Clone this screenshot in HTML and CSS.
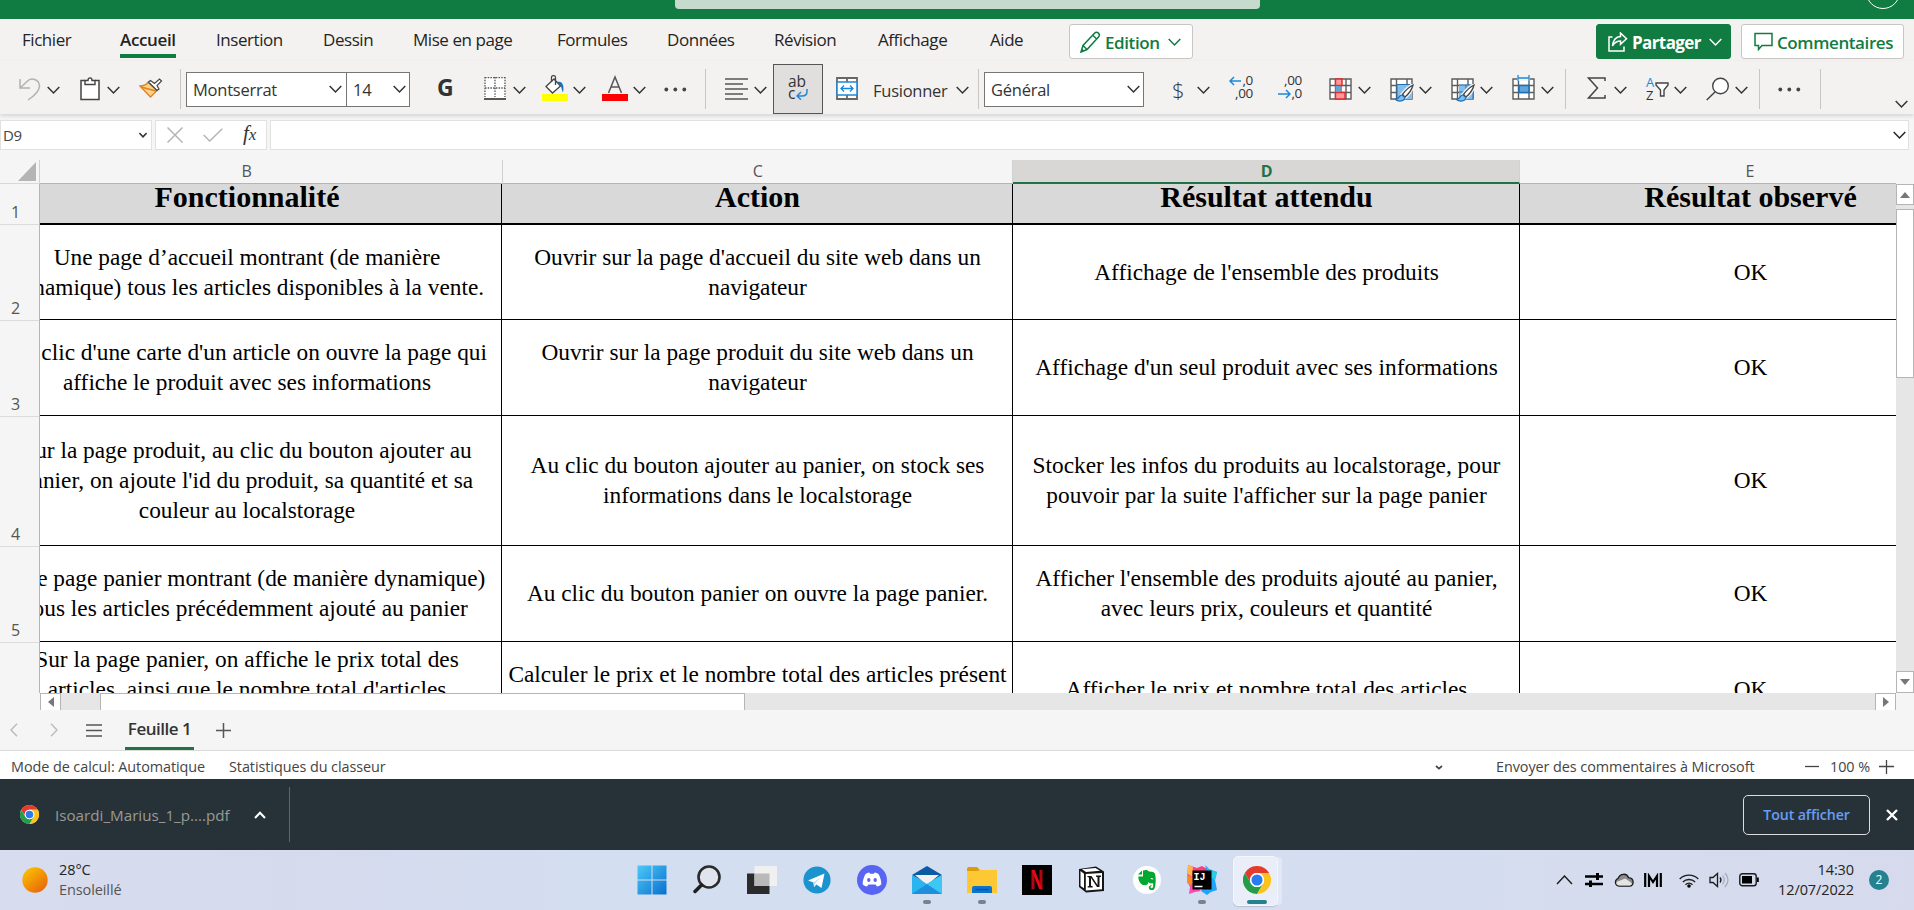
FILE: index.html
```html
<!DOCTYPE html>
<html lang="fr">
<head>
<meta charset="utf-8">
<title>Classeur</title>
<link rel="stylesheet" href="styles.css">
</head>
<body>
<svg class="defs" width="0" height="0">
  <symbol id="chev" viewBox="0 0 13 8"><path d="M.7.9 6.500 6.900 12.300.9" fill="none" stroke="currentColor" stroke-width="1.500"/></symbol>
  <symbol id="chrome" viewBox="0 0 48 48">
    <circle cx="24" cy="24" r="24" fill="#fff"/>
    <path d="M3.200 12A24 24 0 0 1 44.800 12H24A12 12 0 0 0 13.600 30z" fill="#e33b2e"/>
    <path d="M44.800 12A24 24 0 0 1 24 48L34.400 30A12 12 0 0 0 24 12z" fill="#fcc31e"/>
    <path d="M24 48A24 24 0 0 1 3.200 12L13.600 30A12 12 0 0 0 34.400 30z" fill="#259c48"/>
    <circle cx="24" cy="24" r="12" fill="#fff"/><circle cx="24" cy="24" r="9.500" fill="#2a7bf0"/>
  </symbol>
  <symbol id="cells" viewBox="0 0 24 24"><path d="M1 2h21v20H1z" fill="#fff"/><path d="M1 2h21v20H1zM1 8.500h21M1 15.500h21M6.500 2v20M17 2v20" fill="none" stroke="#5c5c5c" stroke-width="1.400"/></symbol>
  <symbol id="brushlet" viewBox="0 0 19 18"><path d="M18 1C14 3 10 7 7.500 10.500L10 13C13 10.500 17 5 18 1z" fill="#fff" stroke="#f3f2f1" stroke-width="4"/><path d="M18 1C14 3 10 7 7.500 10.500L10 13C13 10.500 17 5 18 1z" fill="#fff" stroke="#444" stroke-width="1.300"/><path d="M7 11C3.500 11 5 15 .5 15.500 3.500 18 9.500 17.500 10 13.500z" fill="#83beec" stroke="#1e6fb5" stroke-width="1.200"/></symbol>
</svg>

<header class="titlebar"><div class="search"></div><div class="avatar"></div></header>

<div class="tabs">
  <nav class="tabnames">
    <span>Fichier</span><span class="active">Accueil</span><span>Insertion</span><span>Dessin</span><span>Mise en page</span><span>Formules</span><span>Données</span><span>Révision</span><span>Affichage</span><span>Aide</span>
  </nav>
  <div class="btn edition">
    <svg width="21" height="22" viewBox="0 0 21 22"><path d="M1 21 3 14.500 14.500 2.200a2.600 2.600 0 0 1 4 3.800L7 18.500zM3 14.500l4 4M12.800 4.200l3.900 3.800M2 18.500l1.500 1.500" fill="none" stroke="currentColor" stroke-width="1.500"/></svg>
    <b>Edition</b><svg class="cv" width="13" height="8"><use href="#chev"/></svg>
  </div>
  <div class="btn share">
    <svg width="20" height="20" viewBox="0 0 20 20"><path d="M4.500 5H1v14h15v-4.500M12.500 1l6 5.700-6 5.500V9C9 9 6.500 10.500 4.500 14 5 9 7.500 4.800 12.500 4.500z" fill="none" stroke="currentColor" stroke-width="1.500"/></svg>
    <b>Partager</b><svg class="cv" width="13" height="8"><use href="#chev"/></svg>
  </div>
  <div class="btn comments">
    <svg width="19" height="19" viewBox="0 0 19 19"><path d="M1 1.500h17v12H8L4.500 17.500v-4H1z" fill="none" stroke="currentColor" stroke-width="1.500"/></svg>
    <b>Commentaires</b>
  </div>
</div>

<div class="toolbar">
  <svg class="dim" width="22" height="24" viewBox="0 0 22 24"><path d="M1 2v9h10M1 11 8 4.500C12 0 20 2 20.500 9c0 5-4 9-11.500 14" fill="none" stroke="currentColor" stroke-width="1.500"/></svg>
  <svg class="cv" width="13" height="8"><use href="#chev"/></svg>
  <svg width="20" height="24" viewBox="0 0 20 24"><path d="M5 3.500H1v19h18v-19h-4" fill="#fff" stroke="#444" stroke-width="1.500"/><path d="M5 7.500v-4h3C8 0 12 0 12 3.500h3v4z" fill="#fff" stroke="#444" stroke-width="1.400"/></svg>
  <svg class="cv" width="13" height="8"><use href="#chev"/></svg>
  <svg class="raise" width="24" height="20" viewBox="0 0 24 20"><path d="M1 8Q6 8 9 4.500L18 12.500 11.500 19Z" fill="#fbd48b" stroke="#e5801c" stroke-width="1.300"/><path d="m2 9 15 4" stroke="#e5801c" stroke-width="1.300" fill="none"/><path d="m9.500 4 2-1.500 4 3L20.500 1l2 2-4.500 4.500 2 3.500-2 1.500z" fill="#fff" stroke="#444" stroke-width="1.200"/></svg>
  <i class="sep"></i>
  <div class="box font"><span>Montserrat</span><svg class="cv" width="13" height="8"><use href="#chev"/></svg></div>
  <div class="box size"><span>14</span><svg class="cv" width="13" height="8"><use href="#chev"/></svg></div>
  <b class="bold">G</b>
  <svg class="raise2" width="22" height="23" viewBox="0 0 22 23"><path d="M1 1h20v20H1z" fill="#fff"/><path d="M1 .7h20M1 11h20M1 0v20M11 0v20M21 0v20" fill="none" stroke="#555" stroke-width="1.300" stroke-dasharray="1.500 1.200"/><path d="M0 22h22" stroke="#444" stroke-width="1.800"/></svg>
  <svg class="cv" width="13" height="8"><use href="#chev"/></svg>
  <svg class="raise" width="26" height="26" viewBox="0 0 26 26"><path d="M4 11.500 12 4l6.500 7-8 7zM9.500 7V2.500C9.500 0 13.500 0 13.500 2.500V10" fill="#fff" stroke="#444" stroke-width="1.300"/><path d="M15.500 7c5-1.500 7 4 5.500 10.500-1.500-2-1-5-2.500-6.500z" fill="#1e6fb5"/><path d="M0 19h26v7H0z" fill="#ff0"/></svg>
  <svg class="cv" width="13" height="8"><use href="#chev"/></svg>
  <svg class="raise" width="26" height="26" viewBox="0 0 26 26"><path d="M6.500 18 13 2l6.500 16M8.800 12h8.500" fill="none" stroke="#555" stroke-width="1.500"/><path d="M0 19h26v7H0z" fill="#f00"/></svg>
  <svg class="cv" width="13" height="8"><use href="#chev"/></svg>
  <svg class="dots" width="23" height="5" viewBox="0 0 23 5"><circle cx="2.300" cy="2.500" r="1.900"/><circle cx="11.300" cy="2.500" r="1.900"/><circle cx="20.300" cy="2.500" r="1.900"/></svg>
  <i class="sep"></i>
  <svg width="24" height="22" viewBox="0 0 24 22"><path d="M0 1h23M0 6h18M0 11h23M0 16h18M0 21h23" stroke="#555" stroke-width="1.500"/></svg>
  <svg class="cv" width="13" height="8"><use href="#chev"/></svg>
  <div class="wrapbtn"><span>ab</span><div><span>c</span><svg width="12" height="11" viewBox="0 0 12 11"><path d="M11 0v2.500C11 6 9 7 6 7H1M5 3 1 7l4 3.700" fill="none" stroke="#1e88d8" stroke-width="1.500"/></svg></div></div>
  <svg class="raise2" width="22" height="23" viewBox="0 0 22 23"><path d="M1 1h20v21H1zM11 1v4M11 18v4" fill="#fff" stroke="#666" stroke-width="1.800"/><path d="M1 5h20v13H1z" fill="#fff" stroke="#1e88d8" stroke-width="1.500"/><path d="M5 11.500h12M8 8.500l-3 3 3 3M14 8.500l3 3-3 3" fill="none" stroke="#1e88d8" stroke-width="1.300"/></svg>
  <span class="lbl">Fusionner</span>
  <svg class="cv" width="13" height="8"><use href="#chev"/></svg>
  <i class="sep"></i>
  <div class="box fmt"><span>Général</span><svg class="cv" width="13" height="8"><use href="#chev"/></svg></div>
  <span class="dollar">$</span>
  <svg class="cv" width="13" height="8"><use href="#chev"/></svg>
  <div class="dec"><div><svg width="13" height="10" viewBox="0 0 13 10"><path d="M1 5h11M5 1 1 5l4 4" fill="none" stroke="#1e88d8" stroke-width="1.500"/></svg>,0</div><div>,00</div></div>
  <div class="dec"><div>,00</div><div><svg width="13" height="10" viewBox="0 0 13 10"><path d="M0 5h11M8 1l4 4-4 4" fill="none" stroke="#1e88d8" stroke-width="1.500"/></svg>,0</div></div>
  <svg width="24" height="24"><use href="#cells" width="24" height="24"/><path d="M12 2v20" stroke="#5c5c5c" stroke-width="1.300"/><path d="M6.500 2h6.500v6.500H6.500zM6.500 15.500h9.500V22H6.500z" fill="#ff9a9a" stroke="#e02c2c" stroke-width="1.400"/><path d="M6.500 9h5v6h-5z" fill="#5fa5e0"/></svg>
  <svg class="cv" width="13" height="8"><use href="#chev"/></svg>
  <svg width="26" height="26"><use href="#cells" width="24" height="24" y="1"/><path d="M7 8.500h15V23H7z" fill="#83beec"/><path d="M7 23V8.500h15" fill="none" stroke="#1e6fb5"/><use href="#brushlet" x="5" y="8" width="19" height="18"/></svg>
  <svg class="cv" width="13" height="8"><use href="#chev"/></svg>
  <svg width="26" height="26"><use href="#cells" width="24" height="24" y="1"/><path d="M8 9h14v14H8z" fill="#83beec"/><path d="M8 9h14v14M15 9v14M8 16h14" stroke="#1e6fb5" fill="none"/><use href="#brushlet" x="5" y="8" width="19" height="18"/></svg>
  <svg class="cv" width="13" height="8"><use href="#chev"/></svg>
  <svg class="raise2" width="24" height="26"><use href="#cells" width="24" height="24" y="2"/><path d="M5 0h13v6H5z" fill="#f3f2f1"/><path d="M6 0v6M17 0v6M6 3h11" stroke="#1e88d8" stroke-width="1.300"/><path d="M7 10.500h10v7H7z" fill="#5fa5e0" stroke="#1e6fb5" stroke-width="1.500"/></svg>
  <svg class="cv" width="13" height="8"><use href="#chev"/></svg>
  <i class="sep"></i>
  <svg class="raise2" width="19" height="22" viewBox="0 0 19 22"><path d="M18 4V1H1.500l9 10-9 10H18v-3" fill="none" stroke="#444" stroke-width="1.500"/></svg>
  <svg class="cv" width="13" height="8"><use href="#chev"/></svg>
  <div class="sort"><div><span class="a">A</span><span>Z</span></div><svg width="14" height="15" viewBox="0 0 14 15"><path d="M1 1h12v2L9 8v6H5.500V8L1 3z" fill="#fff" stroke="#444" stroke-width="1.400"/></svg></div>
  <svg class="cv" width="13" height="8"><use href="#chev"/></svg>
  <svg width="24" height="24" viewBox="0 0 24 24"><circle cx="14.500" cy="9" r="7.800" fill="#fff" stroke="#444" stroke-width="1.400"/><path d="M9 15 .7 23" stroke="#444" stroke-width="1.500"/></svg>
  <svg class="cv" width="13" height="8"><use href="#chev"/></svg>
  <i class="sep"></i>
  <svg class="dots" width="23" height="5" viewBox="0 0 23 5"><circle cx="2.300" cy="2.500" r="1.900"/><circle cx="11.300" cy="2.500" r="1.900"/><circle cx="20.300" cy="2.500" r="1.900"/></svg>
  <i class="sep"></i>
  <svg class="cv low" width="13" height="8"><use href="#chev"/></svg>
</div>

<div class="formula">
  <div class="namebox"><span>D9</span><svg width="8" height="6" viewBox="0 0 13 8"><path d="M.7.9 6.500 6.900 12.300.9" fill="none" stroke="#333" stroke-width="2.500"/></svg></div>
  <div class="fxbox">
    <svg width="16" height="16" viewBox="0 0 16 16"><path d="m.5.500 15 15M15.500.500l-15 15" stroke="#b5b5b5" stroke-width="1.500"/></svg>
    <svg width="20" height="14" viewBox="0 0 20 14"><path d="m.7 7 6 6L19.300.700" fill="none" stroke="#b5b5b5" stroke-width="1.500"/></svg>
    <i>f<small>x</small></i>
  </div>
  <div class="input"><svg width="13" height="8"><use href="#chev"/></svg></div>
</div>

<div class="sheet">
  <div class="colheads"><div class="corner"><svg width="18" height="19"><path d="M18 0v19H0z" fill="#b4b4b4"/></svg></div><div>B</div><div>C</div><div class="sel">D</div><div class="e">E</div><div class="end"></div></div>
  <div class="body">
    <div class="rowheads"><div>1</div><div>2</div><div>3</div><div>4</div><div>5</div><div></div></div>
    <div class="grid">
      <div class="row head"><div>Fonctionnalité</div><div>Action</div><div>Résultat attendu</div><div>Résultat observé</div></div>
      <div class="row"><div>Une page d’accueil montrant (de manière<br>dynamique) tous les articles disponibles à la vente.</div><div>Ouvrir sur la page d'accueil du site web dans un<br>navigateur</div><div>Affichage de l'ensemble des produits</div><div>OK</div></div>
      <div class="row"><div>Au clic d'une carte d'un article on ouvre la page qui<br>affiche le produit avec ses informations</div><div>Ouvrir sur la page produit du site web dans un<br>navigateur</div><div>Affichage d'un seul produit avec ses informations</div><div>OK</div></div>
      <div class="row"><div>Sur la page produit, au clic du bouton ajouter au<br>panier, on ajoute l'id du produit, sa quantité et sa<br>couleur au localstorage</div><div>Au clic du bouton ajouter au panier, on stock ses<br>informations dans le localstorage</div><div>Stocker les infos du produits au localstorage, pour<br>pouvoir par la suite l'afficher sur la page panier</div><div>OK</div></div>
      <div class="row"><div>Une page panier montrant (de manière dynamique)<br>tous les articles précédemment ajouté au panier</div><div>Au clic du bouton panier on ouvre la page panier.</div><div>Afficher l'ensemble des produits ajouté au panier,<br>avec leurs prix, couleurs et quantité</div><div>OK</div></div>
      <div class="row"><div>Sur la page panier, on affiche le prix total des<br>articles, ainsi que le nombre total d'articles<br>&nbsp;</div><div>Calculer le prix et le nombre total des articles présent<br>&nbsp;</div><div>Afficher le prix et nombre total des articles</div><div>OK</div></div>
    </div>
    <div class="vscroll"><div class="up"><svg width="10" height="6"><path d="M5 0l5 6H0z" fill="#777"/></svg></div><div class="vthumb"></div><div class="down"><svg width="10" height="6"><path d="M0 0h10L5 6z" fill="#777"/></svg></div></div>
  </div>
  <div class="hscroll"><div class="hl"><svg width="6" height="10"><path d="M6 0v10L0 5z" fill="#777"/></svg></div><div class="hthumb"></div><div class="hr"><svg width="6" height="10"><path d="M0 0v10l6-5z" fill="#777"/></svg></div></div>
</div>

<div class="sheettabs">
  <svg width="8" height="14" viewBox="0 0 8 14"><path d="M7 .7 1 7l6 6.300" fill="none" stroke="#bbb" stroke-width="1.400"/></svg>
  <svg width="8" height="14" viewBox="0 0 8 14"><path d="M1 .7 7 7l-6 6.300" fill="none" stroke="#bbb" stroke-width="1.400"/></svg>
  <svg width="16" height="13" viewBox="0 0 16 13"><path d="M0 1h16M0 6.500h16M0 12h16" stroke="#555" stroke-width="1.500"/></svg>
  <b>Feuille 1</b>
  <svg width="15" height="15" viewBox="0 0 15 15"><path d="M0 7.500h15M7.500 0v15" stroke="#555" stroke-width="1.500"/></svg>
</div>

<div class="status">
  <span>Mode de calcul: Automatique</span><span>Statistiques du classeur</span>
  <svg width="8" height="5" viewBox="0 0 8 5"><path d="M1 1l3 2.700L7 1" fill="none" stroke="#444" stroke-width="1.700"/></svg>
  <span>Envoyer des commentaires à Microsoft</span>
  <svg width="14" height="15" viewBox="0 0 14 15"><path d="M0 6.500h14" stroke="#444" stroke-width="1.300"/></svg><span>100 %</span>
  <svg width="15" height="15" viewBox="0 0 15 15"><path d="M0 6.500h15M7.500 0v14" stroke="#444" stroke-width="1.300"/></svg>
</div>

<div class="downloads">
  <svg width="19" height="19"><use href="#chrome"/></svg><span class="fname">Isoardi_Marius_1_p....pdf</span>
  <svg width="12" height="8" viewBox="0 0 12 8"><path d="m1 7 5-5.300L11 7" fill="none" stroke="#fff" stroke-width="2"/></svg><i></i>
  <div class="showall">Tout afficher</div>
  <svg width="12" height="12" viewBox="0 0 12 12"><path d="m1 1 10 10M11 1 1 11" stroke="#fff" stroke-width="2.300"/></svg>
</div>

<footer class="taskbar">
  <svg class="sun" width="26" height="26"><defs><linearGradient id="sg" x1="0" y1="0" x2=".8" y2="1"><stop offset="0" stop-color="#fecb00"/><stop offset="1" stop-color="#e8640a"/></linearGradient></defs><circle cx="13" cy="13" r="12.700" fill="url(#sg)"/></svg>
  <div class="weather"><span>28°C</span><span>Ensoleillé</span></div>
  <div class="apps">
    <div><svg width="30" height="30"><defs><linearGradient id="wg" x1="0" y1="0" x2="1" y2="1"><stop offset="0" stop-color="#4cc9f8"/><stop offset="1" stop-color="#0a6fce"/></linearGradient></defs><path d="M.5.500h14v14H.5zM15.500.500h14v14h-14zM.5 15.500h14v14H.5zM15.500 15.500h14v14h-14z" fill="url(#wg)"/></svg></div>
    <div><svg width="30" height="30"><circle cx="17" cy="12" r="10.500" fill="#dfe4ee" stroke="#2b2b2b" stroke-width="2.600"/><path d="M9.500 20 3 26.500" stroke="#1f1f1f" stroke-width="3.500" stroke-linecap="round"/></svg></div>
    <div><svg width="30" height="30"><path d="M0 8.500h22.500V29H0z" fill="#2b2b2b"/><path d="M7.500 1H30v20H7.500z" fill="#f0f0f0"/><path d="M7.500 8.500h15V21h-15z" fill="#b9b9b9"/></svg></div>
    <div><svg width="30" height="30"><circle cx="15" cy="15" r="13.600" fill="#1b93ce"/><path d="m6 15.500 16.500-7-3 14.500-5-3.500-2.500 2.500-.5-4.500z" fill="#fff"/><path d="M11.500 17.500 19 12l-6 6.500-1 3.500z" fill="#c3dcec"/></svg></div>
    <div><svg width="30" height="30"><circle cx="15" cy="15" r="15" fill="#5865f2"/><path d="M8.500 9c2-1.300 3.500-1.500 3.800-1.500l.7 1.200h4l.7-1.200c.3 0 1.800.2 3.800 1.500 2 3.500 3 7.500 2.800 10.500-1.500 1.300-3.300 1.800-4.300 2L18.500 19.500h-7l-1.500 2c-1-.2-2.800-.7-4.300-2C5.500 16.500 6.500 12.500 8.500 9z" fill="#fff"/><ellipse cx="11.800" cy="15" rx="1.700" ry="2" fill="#5865f2"/><ellipse cx="18.200" cy="15" rx="1.700" ry="2" fill="#5865f2"/></svg></div>
    <div class="open"><svg width="30" height="30"><path d="M0 10 15 1l15 9-15 9z" fill="#0c59a4"/><path d="M3 10h24L15 20z" fill="#f1f1f1"/><path d="M0 10 15 19 30 10v19H0z" fill="#2bb4ee"/><path d="m0 29 15-10 15 10z" fill="#1d8fdc"/><path d="m15 19 15-9v19z" fill="#3cc8f5"/></svg></div>
    <div class="open"><svg width="30" height="30"><path d="M0 4q0-2 2-2h8l3 3v5H0z" fill="#dc9b08"/><path d="M0 6h10l3-1h17v23H0z" fill="#fdc834"/><path d="M5 28v-5q0-2 2-2h16q2 0 2 2v5z" fill="#0c74cc"/><path d="M8.500 24.500h13" stroke="#07509a" stroke-width="1.300"/></svg></div>
    <div><svg width="30" height="30"><path d="M0 0h30v30H0z"/><path d="M9.500 5h3v19l-3 .5zM17.500 5h3v19.500l-3-.5z" fill="#b1060f"/><path d="M9.500 5h3.200l7.800 19.500-3.300-.5z" fill="#e50914"/></svg></div>
    <div><svg width="30" height="30"><path d="M2 4 19 1.500 27 6.500V26L9 27.500 2 22z" fill="#151515"/><path d="M5 4.200 18.500 3l4.500 2.700L9 7z" fill="#fff"/><path d="M8.800 9 25 8v16.200L8.800 25.500z" fill="#fff"/><path d="m3.500 6 3.500 2.800v14.500L3.500 21z" fill="#fff"/><path d="M10.500 11h4l6 9v-8l-1.500-.3V10.500h5v1.200l-1.500.5V22h-2.500l-6-9v7.800l1.700.5v1.200h-5v-1.200l1.300-.4v-8.500l-1.500-.4z" fill="#151515"/></svg></div>
    <div><svg width="30" height="30"><circle cx="15" cy="15" r="14" fill="#fff"/><path d="M11 5.500c3-1 5-.5 6 1 4 .2 6 .8 6.200 3 .8 4 .8 10-.7 14-1 2.500-6 2-5.700-1 .2-2 2.500-2.500 3.500-1.500-1.500 0-2 .6-1.800 1.500.5 1.300 2 1 2.500-.5.400-1.500.3-3-.5-4-2 1-3 .3-4-1-.5 3-2.500 3.500-5 3-3-.6-5-4-5.200-8.500h4.700z" fill="#00a82d"/><path d="M10 5.500v4H6z" fill="#00a82d"/><path d="M18.500 14c.3-1.500 2.500-1.200 2.800.5z" fill="#fff"/></svg></div>
    <div class="open"><svg width="30" height="30"><path d="m1 0 9 3 5-2 7 4-8 10L0 18z" fill="#ff3c7e"/><path d="m1 0 5 2-1 10-4-3z" fill="#ffb64d"/><path d="m0 16 6 2 8 8-6 1-6 2 1-7z" fill="#fb4bb0"/><path d="m0 10 7 3-3 7-4-2z" fill="#ff8a1f"/><path d="m18 0 4 4 8 3-2 8 2 10-6 2-4 3-6-4 8-12z" fill="#1fa5fa"/><path d="m20 1 2 4 8 2-2 8-7-5z" fill="#25cfe8"/><path d="M5.500 5.500h19v19h-19z"/><path d="M7.500 21.500h8" stroke="#fff" stroke-width="1.500"/><text x="6.500" y="14.500" class="ij">IJ</text></svg></div>
    <div class="open current"><svg width="28" height="28"><use href="#chrome"/></svg></div>
  </div>
  <div class="tray">
    <svg width="17" height="10" viewBox="0 0 17 10"><path d="m1 9 7.500-8L16 9" fill="none" stroke="#1b1b1b" stroke-width="1.400"/></svg>
    <svg width="18" height="14" viewBox="0 0 18 14"><path d="M0 3.500h18M0 11h18" stroke="#000" stroke-width="2.500"/><path d="M12.500 0v7M5.500 7.500v6.500" stroke="#000" stroke-width="3"/></svg>
    <svg width="20" height="14" viewBox="0 0 20 14"><path d="M5 13.200A4 4 0 0 1 4 5.500C6 0 13 0 14.500 4.700c6 .3 6 8.500 1 8.500z" fill="#8b8b8b" stroke="#1b1b1b" stroke-width="1.300"/><path d="M5 12.500c-4-1-3-4.500 0-4.500l6-2.500c3 1.500 5 3.500 7 5-.5 1.500-1.500 2-3 2z" fill="#e4e4e4"/></svg>
    <svg width="18" height="14" viewBox="0 0 18 14"><path d="M1.200 0v14M16.800 0v14M5 14V3l4 6 4-6v11" fill="none" stroke="#000" stroke-width="2.200"/></svg>
    <svg class="wifi" width="20" height="15" viewBox="0 0 20 15"><path d="M.7 6a13 13 0 0 1 18.600 0M3.800 9a9 9 0 0 1 12.400 0M6.500 11.700a5 5 0 0 1 7 0" fill="none" stroke="#1b1b1b" stroke-width="1.300"/><circle cx="10" cy="13" r="1.800"/></svg>
    <svg width="20" height="16" viewBox="0 0 20 16"><path d="M1 5.500h3L8.500 1.500v13L4 10.500H1zM11 5.500q2 2.500 0 5" fill="none" stroke="#1b1b1b" stroke-width="1.300"/><path d="M13.500 3.500q3.500 4.500 0 9M16 1q6 7 0 14" fill="none" stroke="#a5abbb" stroke-width="1.200"/></svg>
    <svg width="20" height="14" viewBox="0 0 20 14"><rect x=".8" y=".8" width="16.400" height="12" rx="2.500" fill="none" stroke="#1b1b1b" stroke-width="1.400"/><path d="M3 3h10v7.500H3z"/><path d="M18 4.500h1.800v4.500H18z"/></svg>
  </div>
  <div class="clock"><span>14:30</span><span>12/07/2022</span></div>
  <div class="badge">2</div>
</footer>
</body>
</html>
```
FILE: styles.css
```css
* { box-sizing: border-box; }
body { margin: 0; width: 1914px; height: 910px; overflow: hidden; background: #f3f2f1; font-family: "Open Sans", sans-serif; color: #252423; display: flex; flex-direction: column; }
svg { display: block; flex: none; }
.defs { position: absolute; }
.titlebar { height: 19px; flex: none; background: #107c41; position: relative; overflow: hidden; }
.search { width: 585px; height: 9px; margin-left: 675px; background: #c6dbce; border-radius: 0 0 4px 4px; }
.avatar { position: absolute; left: 1866px; top: -25px; width: 34px; height: 34px; border: 1.5px solid #fff; border-radius: 50%; }

.tabs { height: 42px; flex: none; display: flex; align-items: flex-start; padding: 5px 10px 0 22px; }
.tabnames { width: 1047px; display: grid; grid-template-columns: 98px 96px 107px 90px 144px 110px 107px 104px 112px 50px; justify-items: start; font-size: 17px; letter-spacing: -.45px; line-height: 32px; white-space: nowrap; }
.tabnames .active { font-weight: 600; letter-spacing: -.35px; height: 34px; border-bottom: 4px solid #107c41; }
.btn { height: 35px; border-radius: 3px; border: 1px solid #c8c6c4; background: #fff; color: #107c41; display: flex; align-items: center; font-size: 17px; white-space: nowrap; }
.btn b { font-weight: 600; margin-left: 4px; letter-spacing: -.4px; padding-top: 2px; }
.btn .cv { margin-left: 8px; }
.edition { width: 124px; padding-left: 10px; }
.share { width: 135px; margin-left: 403px; background: #107c41; color: #fff; border-color: #107c41; padding-left: 11px; }
.share b { font-weight: 700; letter-spacing: -.6px; }
.comments { width: 163px; margin-left: 10px; padding-left: 12px; }

.toolbar { height: 53px; flex: none; padding: 3px 0 0 19px; display: grid; align-items: center; justify-items: start; color: #333; box-shadow: 0 2px 4px #0002; z-index: 1;
  grid-template-columns: 28px 33px 27px 32px 41px 6px 160px 91px 47px 29px 29px 31px 29px 31px 31px 41px 20px 29px 19px 63px 37px 83px 22px 6px 188px 25px 33px 49px 50px 29px 32px 29px 32px 29px 32px 29px 24px 22px 27px 32px 28px 32px 29px 24px 19px 42px 75px 19px; }
.toolbar > .cv { margin-top: 2px; }
.toolbar .dim { color: #b3b1af; }
.toolbar .dots { fill: #444; }
.toolbar .raise { margin-top: -2px; }
.toolbar .raise2 { margin-top: -2px; }
.toolbar > .low { margin-top: 29px; }
.sep { width: 1px; height: 40px; background: #c8c6c4; }
.box { height: 35px; border: 1px solid #767676; background: #fff; display: flex; align-items: center; justify-content: space-between; padding: 0 4px 0 6px; font-size: 16.5px; }
.font { width: 161px; }
.size { width: 64px; padding-right: 3px; }
.fmt { width: 160px; padding-right: 3px; }
.box span { letter-spacing: -.25px; }
.bold { font-size: 23px; line-height: 24px; font-weight: 700; margin-top: -4px; }
.wrapbtn { width: 50px; height: 50px; border: 1px solid #555; background: #e1dfdd; padding: 10px 0 0 14px; font-size: 15.5px; line-height: 13px; }
.wrapbtn span { display: block; }
.wrapbtn div { display: flex; height: 13px; line-height: 11px; gap: 1px; }
.wrapbtn svg { margin-top: 1px; }
.lbl { font-size: 16.5px; letter-spacing: -.25px; padding-top: 2px; }
.dollar { font-size: 22px; line-height: 24px; font-weight: 300; }
.dec { width: 23px; font-size: 13.5px; line-height: 13px; letter-spacing: -.3px; margin-top: -4px; }
.dec div { display: flex; justify-content: flex-end; align-items: center; height: 13px; }
.sort { display: flex; align-items: center; }
.sort div { width: 9px; display: flex; flex-direction: column; font-size: 13px; line-height: 13px; }
.sort .a { color: #1e88d8; }

.formula { height: 45px; flex: none; background: #f5f5f5; padding-top: 6px; display: flex; gap: 3px; }
.formula > div { height: 30px; background: #fff; border: 1px solid #e1e1e1; display: flex; align-items: center; }
.namebox { width: 152px; justify-content: space-between; padding: 0 4px 0 2px; font-size: 15px; color: #444; }
.namebox span { letter-spacing: -.3px; }
.fxbox { width: 112px; padding-left: 11px; gap: 20px; }
.fxbox i { font: italic 21px "Liberation Serif", serif; margin-top: -4px; color: #333; }
.fxbox small { font-size: 17px; }
.input { width: 1639px; justify-content: flex-end; padding-right: 2px; }

.sheet { height: 551px; flex: none; background: #f5f5f5; }
.colheads { display: flex; height: 25px; padding-top: 1px; color: #555; font-size: 16px; line-height: 23px; text-align: center; }
.colheads > div { width: 511px; border-right: 1px solid #d0d0d0; border-bottom: 1px solid #b5b5b5; letter-spacing: -.5px; }
.colheads > .corner { width: 40px; padding: 2px 4px 0 18px; border-bottom-color: #d8d8d8; }
.colheads .corner + div { width: 463px; padding-right: 49px; }
.colheads > .sel { width: 507px; background: #d8d7d5; color: #217346; font-weight: 700; border-bottom: 2px solid #217346; }
.colheads > .e { width: 376px; padding-left: 83px; border-right: 0; }
.colheads > .end { width: 18px; border: 0; }
.body { height: 509px; display: flex; }
.rowheads { width: 40px; display: grid; grid-template-rows: 41px 96px 96px 130px 96px 50px; border-right: 1px solid #b5b5b5; }
.rowheads div { border-bottom: 1px solid #dcdcdc; padding-right: 8px; text-align: center; font-size: 16px; color: #555; display: flex; align-items: flex-end; justify-content: center; line-height: 23px; }
.rowheads div:last-child { border: 0; }
.grid { width: 1856px; height: 509px; overflow: hidden; background: #fff; display: grid; grid-template-rows: 41px 95px 96px 130px 96px 96px; font: 23.33px/30px "Liberation Serif", serif; color: #000; }
.row { display: grid; grid-template-columns: 510px 511px 507px 461px; grid-template-rows: 100%; margin-left: -48px; }
.row > div { border-right: 1px solid #000; border-bottom: 1px solid #000; display: grid; place-content: center; text-align: center; white-space: nowrap; padding: 0 0 1px 1px; }
.head > div { background: #d9d9d9; font-size: 30px; line-height: 26px; font-weight: 700; border-bottom-width: 2px; padding-bottom: 13px; }
.vscroll { width: 18px; background: #e6e6e6; display: flex; flex-direction: column; }
.vscroll > div { background: #fff; border: 1px solid #b5b5b5; display: grid; place-items: center; }
.up { height: 21px; }
.vthumb { height: 169px; margin-top: 4px; }
.down { height: 22px; margin-top: auto; }
.hscroll { height: 17px; margin: 0 18px 0 40px; background: #e6e6e6; display: flex; }
.hscroll > div { background: #fff; border: 1px solid #b5b5b5; border-bottom: 0; display: grid; place-items: center; }
.hl { width: 21px; }
.hthumb { width: 645px; margin-left: 39px; }
.hr { width: 21px; margin-left: auto; }

.sheettabs { height: 41px; flex: none; background: #f5f5f5; border-bottom: 1px solid #dadada; display: grid; grid-template-columns: 40px 36px 38px 92px 20px; align-items: center; justify-items: start; padding-left: 10px; }
.sheettabs b { width: 69px; height: 40px; line-height: 38px; border-bottom: 3px solid #217346; font-size: 17px; font-weight: 600; text-align: center; color: #333; letter-spacing: -.5px; white-space: nowrap; margin-left: 1px; }

.status { height: 28px; flex: none; background: #fff; color: #444; font-size: 14.4px; line-height: 32px; letter-spacing: -.06px; white-space: nowrap; padding-left: 11px; display: grid; grid-template-columns: 218px 1206px 61px 309px 25px 49px 20px; }
.status svg { align-self: center; margin-top: 1px; }
.downloads { height: 71px; flex: none; background: #263238; display: grid; grid-template-columns: 35px 199px 35px 1454px 143px 20px; padding-left: 20px; align-items: center; color: #9a9a94; }
.fname { font-size: 15.2px; }
.downloads i { width: 1px; height: 55px; background: #5c676c; }
.showall { width: 127px; height: 40px; border: 1px solid #dadce0; border-radius: 5px; color: #669df6; font-size: 14.2px; font-weight: 600; text-align: center; line-height: 37px; letter-spacing: -.1px; }

.taskbar { height: 60px; flex: none; background: linear-gradient(90deg, #d7dcee, #d6daed 15%, #d3def0 30%, #d4def0 70%, #d6daec); display: flex; align-items: center; font-size: 14.5px; line-height: 20px; }
.sun { margin-left: 22px; }
.weather { width: 565px; padding-left: 11px; display: flex; flex-direction: column; letter-spacing: -.1px; }
.weather span + span { color: #555; }
.apps { display: flex; margin-left: 11px; }
.apps > div { width: 55px; height: 60px; display: grid; place-items: center; position: relative; }
.open::after { content: ""; position: absolute; left: 24px; bottom: 6px; width: 8px; height: 4px; border-radius: 2px; background: #7c818c; }
.apps svg { position: relative; }
.current::before { content: ""; position: absolute; left: 4px; top: 6px; width: 43px; height: 48px; border-radius: 5px; background: #eaeef8; border: 1px solid #f5f7fb; box-shadow: 5px 0 0 -1px #e2e8f5, 0 1px 1px #0002; }
.current::after { left: 18px; width: 20px; background: #26818f; }
.ij { font: 700 10px "Liberation Mono", monospace; fill: #fff; }
.tray { margin-left: 272px; width: 225px; display: grid; grid-template-columns: 29px 29px 30px 35px 30px 30px 20px; align-items: center; }
.clock { display: flex; flex-direction: column; text-align: right; width: 73px; letter-spacing: -.1px; align-items: flex-end; }
.badge { width: 20px; height: 20px; margin-left: 15px; border-radius: 50%; background: #26818f; color: #fff; font-size: 12px; text-align: center; }
```
